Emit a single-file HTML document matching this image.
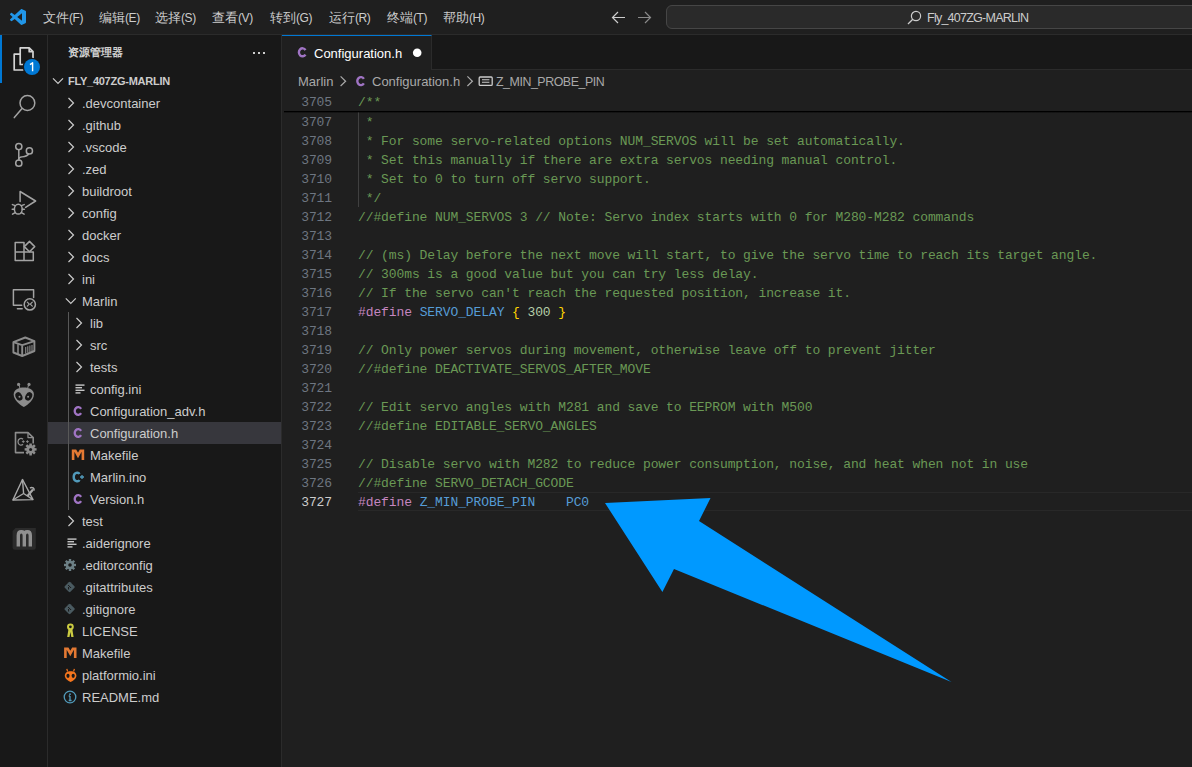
<!DOCTYPE html>
<html><head><meta charset="utf-8">
<style>
*{margin:0;padding:0;box-sizing:border-box}
html,body{width:1192px;height:767px;overflow:hidden;background:#1f1f1f;font-family:"Liberation Sans",sans-serif;color:#cccccc}
.abs{position:absolute}
#title{left:0;top:0;width:1192px;height:35px;background:#1f1f1f;border-bottom:1px solid #2b2b2b}
.menu{position:absolute;top:1px;height:34px;line-height:34px;font-size:13px;color:#cccccc;white-space:nowrap}
#act{left:0;top:35px;width:48px;height:732px;background:#181818;border-right:1px solid #2b2b2b}
#side{left:48px;top:35px;width:234px;height:732px;background:#181818;border-right:1px solid #2b2b2b}
.row{position:absolute;left:0;width:233px;height:22px;line-height:22px;font-size:13px;color:#cccccc;white-space:nowrap}
.row .t{position:absolute;top:1px}
.chev{position:absolute;top:0}
#tabs{left:282px;top:35px;width:910px;height:35px;background:#181818;border-bottom:1px solid #2b2b2b}
#tab{left:282px;top:35px;width:150px;height:35px;background:#1f1f1f;border-top:1px solid #0078d4;border-right:1px solid #2b2b2b}
#crumb{left:282px;top:70px;width:910px;height:22px;background:#1f1f1f;font-size:13px;color:#a9a9a9;line-height:22px;white-space:nowrap}
.ln{position:absolute;left:282px;width:50px;height:19px;line-height:21px;text-align:right;font-family:"Liberation Mono",monospace;font-size:13px;color:#6e7681;letter-spacing:-0.1px}
.code{position:absolute;left:358px;height:19px;line-height:21px;font-family:"Liberation Mono",monospace;font-size:13px;letter-spacing:-0.1px;white-space:pre;color:#6a9955}
.kw{color:#c586c0}.id{color:#569cd6}.br{color:#ffd700}.num{color:#b5cea8}
</style></head><body>

<div id="title" class="abs">
  <svg class="abs" style="left:10px;top:9px" width="16" height="16" viewBox="0 0 100 100">
    <path d="M96.46 10.8 L75.86 0.87 C73.48 -0.27 70.6 0.21 68.74 2.08 L29.3 38.06 L12.12 25.02 C10.52 23.8 8.28 23.9 6.8 25.26 L1.28 30.28 C-0.54 31.94 -0.54 34.8 1.28 36.46 L16.18 50 L1.28 63.54 C-0.54 65.2 -0.54 68.06 1.28 69.72 L6.8 74.74 C8.28 76.1 10.52 76.2 12.12 74.98 L29.3 61.94 L68.74 97.92 C70.6 99.79 73.48 100.27 75.86 99.13 L96.46 89.2 C98.62 88.16 100 85.98 100 83.58 V16.42 C100 14.02 98.62 11.84 96.46 10.8 Z M75 72.7 L45.07 50 L75 27.3 V72.7 Z" fill="#2196e8"/>
  </svg>
  <div class="menu" style="left:43px">文件<span style="font-size:12px;letter-spacing:-0.4px">(F)</span></div>
  <div class="menu" style="left:99px">编辑<span style="font-size:12px;letter-spacing:-0.4px">(E)</span></div>
  <div class="menu" style="left:155px">选择<span style="font-size:12px;letter-spacing:-0.4px">(S)</span></div>
  <div class="menu" style="left:212px">查看<span style="font-size:12px;letter-spacing:-0.4px">(V)</span></div>
  <div class="menu" style="left:270px">转到<span style="font-size:12px;letter-spacing:-0.4px">(G)</span></div>
  <div class="menu" style="left:329px">运行<span style="font-size:12px;letter-spacing:-0.4px">(R)</span></div>
  <div class="menu" style="left:387px">终端<span style="font-size:12px;letter-spacing:-0.4px">(T)</span></div>
  <div class="menu" style="left:443px">帮助<span style="font-size:12px;letter-spacing:-0.4px">(H)</span></div>
  <svg class="abs" style="left:611px;top:11px" width="15" height="13" viewBox="0 0 15 13"><path d="M7 1 L1.5 6.5 L7 12 M1.5 6.5 H14" stroke="#cccccc" stroke-width="1.2" fill="none"/></svg>
  <svg class="abs" style="left:637px;top:11px" width="15" height="13" viewBox="0 0 15 13"><path d="M8 1 L13.5 6.5 L8 12 M13.5 6.5 H1" stroke="#8a8a8a" stroke-width="1.2" fill="none"/></svg>
  <div class="abs" style="left:666px;top:5px;width:560px;height:24px;background:#2a2a2a;border:1px solid #464646;border-radius:6px"></div>
  <svg class="abs" style="left:907px;top:10px" width="15" height="15" viewBox="0 0 15 15"><circle cx="9" cy="6" r="4.6" stroke="#cccccc" stroke-width="1.2" fill="none"/><path d="M5.8 9.2 L1 14" stroke="#cccccc" stroke-width="1.3"/></svg>
  <div class="abs" style="left:927px;top:1px;height:34px;line-height:34px;font-size:12.5px;letter-spacing:-0.75px;color:#cccccc">Fly_407ZG-MARLIN</div>
</div>

<div id="act" class="abs"></div>
<svg class="abs" style="left:0;top:0" width="48" height="767" viewBox="0 0 48 767">
  <rect x="0" y="35" width="2" height="48" fill="#0078d4"/>
  <g fill="none" stroke="#d4d4d4" stroke-width="1.7" stroke-linejoin="round">
    <path d="M24.5 64.5 H20.2 V47.9 H29.2 L33 51.7 V60"/><path d="M29.2 47.9 V51.7 H33"/>
    <path d="M20.2 54.2 H14.2 V70 H24.5"/>
  </g>
  <circle cx="32" cy="67" r="9.3" fill="#181818"/><circle cx="32" cy="67" r="8" fill="#0078d4"/>
  <path d="M32.6 71.3 V62.8 L30 64.6" stroke="#ffffff" stroke-width="1.4" fill="none" stroke-linejoin="round"/>
  <g fill="none" stroke="#a3a3a3" stroke-width="1.5" stroke-linejoin="round" stroke-linecap="round">
    <circle cx="27.4" cy="103" r="7.4"/><path d="M21.8 108.8 L14.3 117.6"/>
    <circle cx="18.8" cy="146.6" r="3.1"/><circle cx="18.8" cy="163.2" r="3.1"/><circle cx="29.4" cy="150.9" r="3.1"/>
    <path d="M18.8 149.7 V160.1"/><path d="M28.6 153.9 C27.5 156.5 24 156.6 21 157 C19.6 157.3 18.8 158.3 18.8 159"/>
    <path d="M20.1 201.6 V191.5 L35.6 201 L25.6 207.4"/>
    <ellipse cx="18.3" cy="209.2" rx="3.9" ry="4.9"/><path d="M14.4 209.3 H12.2 M22.2 209.3 H24.4 M15.3 205.6 L12.4 204.6 M21.3 205.6 L24.2 204.6 M15.2 212.6 L12.5 214.2 M21.4 212.6 L24.1 214.2"/>
    <path d="M15.2 242.6 H24 V260.6 H15.2 Z M15.2 251.9 H33.3 V260.6 H24"/><path d="M24.3 246.6 L29.5 241.4 L34.7 246.6 L29.5 251.8 Z"/>
    <path d="M21.7 305.3 H13.4 V289.7 H33.6 V297.6"/><path d="M17.4 308.7 H22.2"/>
    <circle cx="29.8" cy="304.4" r="5.6"/><path d="M27.3 302.2 L29.3 304.2 L27.3 306.2 M32.3 302.2 L30.3 304.2 L32.3 306.2" stroke-width="1.2"/>
  </g>
  <g fill="none" stroke="#8c8c8c" stroke-width="1.9" stroke-linejoin="round">
    <path d="M13.4 342.2 L25.3 337.5 L34.4 341.2 V351 L22.2 356 L13.4 352.5 Z"/><path d="M13.4 342.2 L22.2 345.2 L34.4 341.2 M22.2 345.2 V356"/>
    <path d="M18 344.2 V354" stroke-width="1.5"/>
    <path d="M25.7 347 V353.5 M27.8 346.3 V352.8 M29.9 345.6 V352 M32 344.9 V351.3" stroke-width="1.1"/>
  </g>
  <g fill="#8c8c8c">
    <path d="M23.8 387.4 C29.5 387.4 33.9 389.6 33.9 394.4 C33.9 399.5 28.5 404.5 23.8 407 C19.1 404.5 13.7 399.5 13.7 394.4 C13.7 389.6 18.1 387.4 23.8 387.4 Z"/>
    <circle cx="18.6" cy="384.4" r="1.6"/><circle cx="29" cy="384.4" r="1.6"/>
  </g>
  <path d="M19 385 L20 388.5 M28.6 385 L27.6 388.5" stroke="#8c8c8c" stroke-width="1"/>
  <ellipse cx="18.9" cy="396.3" rx="3.2" ry="4.5" fill="#181818" transform="rotate(-28 19.1 396.3)"/>
  <ellipse cx="28.7" cy="396.3" rx="3.2" ry="4.5" fill="#181818" transform="rotate(28 28.5 396.3)"/>
  <circle cx="19.5" cy="396.8" r="1" fill="#8c8c8c"/><circle cx="28.1" cy="396.8" r="1" fill="#8c8c8c"/>
  <g fill="none" stroke="#8c8c8c" stroke-width="1.6" stroke-linejoin="round">
    <path d="M24 452.6 H15.5 V432.6 H28 L33.2 437.6 V443.5"/><path d="M28 432.6 V437.6 H33.2" stroke-width="1.3"/>
    <path d="M23 439.3 C21.5 437.7 18 438.2 18 441.8 C18 445.4 21.5 445.9 23 444.3" stroke-width="1.3"/>
    <path d="M23.3 440.2 V443 M21.9 441.6 H24.7 M27.4 440.2 V443 M26 441.6 H28.8" stroke-width="0.9"/>
  </g>
  <g fill="#8c8c8c">
    <circle cx="30.6" cy="449.4" r="4.2"/>
    <path d="M29.4 443.4 H31.8 L32 446 H29.2 Z" transform="rotate(0 30.6 449.4)"/>
    <path d="M29.4 443.4 H31.8 L32 446 H29.2 Z" transform="rotate(45 30.6 449.4)"/>
    <path d="M29.4 443.4 H31.8 L32 446 H29.2 Z" transform="rotate(90 30.6 449.4)"/>
    <path d="M29.4 443.4 H31.8 L32 446 H29.2 Z" transform="rotate(135 30.6 449.4)"/>
    <path d="M29.4 443.4 H31.8 L32 446 H29.2 Z" transform="rotate(180 30.6 449.4)"/>
    <path d="M29.4 443.4 H31.8 L32 446 H29.2 Z" transform="rotate(225 30.6 449.4)"/>
    <path d="M29.4 443.4 H31.8 L32 446 H29.2 Z" transform="rotate(270 30.6 449.4)"/>
    <path d="M29.4 443.4 H31.8 L32 446 H29.2 Z" transform="rotate(315 30.6 449.4)"/>
  </g>
  <circle cx="30.6" cy="449.4" r="1.5" fill="#181818"/>
  <g fill="none" stroke="#a8a8a8" stroke-width="1.4" stroke-linejoin="round">
    <path d="M22.5 479.5 L12.9 500 L33 499.6 Z"/><path d="M22.5 479.5 L23.6 493.5 L12.9 500 M23.6 493.5 L33 499.6"/>
  </g>
  <path d="M27.5 496 L33 489.5" stroke="#a8a8a8" stroke-width="2.2"/>
  <path d="M30 488 C32.5 486.5 34.5 488.5 34 490.5" stroke="#a8a8a8" stroke-width="1.6" fill="none"/>
  <path d="M12.6 531 L15.5 528.1 H35.8 V547.5 Q35.8 549.8 33.5 549.8 H14.9 Q12.6 549.8 12.6 547.5 Z" fill="#2b2b2b"/>
  <path d="M18.3 546.6 V535.5 C18.3 530.5 24.3 530.5 24.3 535.5 V546.6 M24.3 535.5 C24.3 530.5 30.3 530.5 30.3 535.5 V546.6" fill="none" stroke="#909090" stroke-width="3.4"/>
</svg>
<div id="side" class="abs"></div>
<svg class="abs" style="left:0;top:0" width="282" height="767" viewBox="0 0 282 767">
<g transform="translate(48 0)"><rect x="0" y="422" width="233" height="22" fill="#37373d"/></g>
<path d="M53 78.4 L58 83.4 L63 78.4" stroke="#cccccc" stroke-width="1.2" fill="none"/>
<rect x="68" y="312" width="1" height="198" fill="#585858"/>
<rect x="253" y="52" width="2" height="2" fill="#cccccc"/><rect x="258" y="52" width="2" height="2" fill="#cccccc"/><rect x="263" y="52" width="2" height="2" fill="#cccccc"/>
<path d="M68.5 98 L73.5 103 L68.5 108" stroke="#cccccc" stroke-width="1.2" fill="none"/>
<path d="M68.5 120 L73.5 125 L68.5 130" stroke="#cccccc" stroke-width="1.2" fill="none"/>
<path d="M68.5 142 L73.5 147 L68.5 152" stroke="#cccccc" stroke-width="1.2" fill="none"/>
<path d="M68.5 164 L73.5 169 L68.5 174" stroke="#cccccc" stroke-width="1.2" fill="none"/>
<path d="M68.5 186 L73.5 191 L68.5 196" stroke="#cccccc" stroke-width="1.2" fill="none"/>
<path d="M68.5 208 L73.5 213 L68.5 218" stroke="#cccccc" stroke-width="1.2" fill="none"/>
<path d="M68.5 230 L73.5 235 L68.5 240" stroke="#cccccc" stroke-width="1.2" fill="none"/>
<path d="M68.5 252 L73.5 257 L68.5 262" stroke="#cccccc" stroke-width="1.2" fill="none"/>
<path d="M68.5 274 L73.5 279 L68.5 284" stroke="#cccccc" stroke-width="1.2" fill="none"/>
<path d="M65.8 298.4 L70.8 303.4 L75.8 298.4" stroke="#cccccc" stroke-width="1.2" fill="none"/>
<path d="M76.5 318 L81.5 323 L76.5 328" stroke="#cccccc" stroke-width="1.2" fill="none"/>
<path d="M76.5 340 L81.5 345 L76.5 350" stroke="#cccccc" stroke-width="1.2" fill="none"/>
<path d="M76.5 362 L81.5 367 L76.5 372" stroke="#cccccc" stroke-width="1.2" fill="none"/>
<g fill="#c5c5c5"><rect x="75.5" y="384.4" width="9" height="1.4"/><rect x="75.5" y="387.0" width="6.5" height="1.4"/><rect x="75.5" y="389.59999999999997" width="9" height="1.4"/><rect x="75.5" y="392.2" width="5" height="1.4"/></g>
<path d="M81.10 408.82 A3.50 3.9 0 1 0 81.10 413.18" stroke="#a074c4" stroke-width="2.3" fill="none"/>
<path d="M81.10 430.82 A3.50 3.9 0 1 0 81.10 435.18" stroke="#a074c4" stroke-width="2.3" fill="none"/>
<path d="M73.1 460 V450.8 H75.39999999999999 L78.0 455.5 L80.6 450.8 H82.89999999999999 V460" stroke="#e37933" stroke-width="2.6" fill="none" stroke-linejoin="miter"/>
<path d="M79.5 474 C78.5 472 73.7 472 73.7 477 C73.7 482 78.5 482 79.5 480" stroke="#519aba" stroke-width="2.4" fill="none"/><path d="M82.0 475 V479 M80.0 477 H84.0" stroke="#519aba" stroke-width="1.3"/>
<path d="M81.10 496.82 A3.50 3.9 0 1 0 81.10 501.18" stroke="#a074c4" stroke-width="2.3" fill="none"/>
<path d="M68.5 516 L73.5 521 L68.5 526" stroke="#cccccc" stroke-width="1.2" fill="none"/>
<g fill="#c5c5c5"><rect x="67.5" y="538.4" width="9" height="1.4"/><rect x="67.5" y="541.0" width="6.5" height="1.4"/><rect x="67.5" y="543.6" width="9" height="1.4"/><rect x="67.5" y="546.1999999999999" width="5" height="1.4"/></g>
<g fill="#6d8086"><circle cx="70" cy="565" r="4.3"/><rect x="68.8" y="559" width="2.4" height="3" transform="rotate(0 70 565)"/><rect x="68.8" y="559" width="2.4" height="3" transform="rotate(45 70 565)"/><rect x="68.8" y="559" width="2.4" height="3" transform="rotate(90 70 565)"/><rect x="68.8" y="559" width="2.4" height="3" transform="rotate(135 70 565)"/><rect x="68.8" y="559" width="2.4" height="3" transform="rotate(180 70 565)"/><rect x="68.8" y="559" width="2.4" height="3" transform="rotate(225 70 565)"/><rect x="68.8" y="559" width="2.4" height="3" transform="rotate(270 70 565)"/><rect x="68.8" y="559" width="2.4" height="3" transform="rotate(315 70 565)"/></g><circle cx="70" cy="565" r="1.8" fill="#181818"/>
<rect x="65.6" y="583.0" width="8" height="8" rx="1.2" fill="#4a5a60" transform="rotate(45 69.6 587.0)"/><path d="M68.1 585 L71.1 588 M68.6 587 V589.5" stroke="#181818" stroke-width="1"/>
<rect x="65.6" y="605.0" width="8" height="8" rx="1.2" fill="#4a5a60" transform="rotate(45 69.6 609.0)"/><path d="M68.1 607 L71.1 610 M68.6 609 V611.5" stroke="#181818" stroke-width="1"/>
<g fill="none" stroke="#cbcb41" stroke-width="2"><circle cx="70.4" cy="626.8" r="2.4"/></g><path d="M68.5 629 L67.2 637 H69.5 L70.4 632 L71.3 637 H73.6 L72.3 629 Z" fill="#cbcb41"/>
<path d="M65.39999999999999 658 V648.8 H67.69999999999999 L70.3 653.5 L72.89999999999999 648.8 H75.19999999999999 V658" stroke="#e37933" stroke-width="2.6" fill="none" stroke-linejoin="miter"/>
<path d="M70.60000000000001 671.2 C75.10000000000001 671.2 76.4 673.5 76.4 675.8 C76.4 678.5 73.10000000000001 681 70.60000000000001 682 C68.10000000000001 681 64.80000000000001 678.5 64.80000000000001 675.8 C64.80000000000001 673.5 66.10000000000001 671.2 70.60000000000001 671.2 Z" fill="#f5761e"/><path d="M67.60000000000001 671.5 L66.80000000000001 668.8 M73.60000000000001 671.5 L74.4 668.8" stroke="#f5761e" stroke-width="1.2"/><ellipse cx="68.00000000000001" cy="675.8" rx="1.6" ry="2.1" fill="#181818"/><ellipse cx="73.2" cy="675.8" rx="1.6" ry="2.1" fill="#181818"/>
<circle cx="70" cy="697" r="5.8" stroke="#519aba" stroke-width="1.3" fill="none"/><circle cx="70" cy="694.2" r="0.9" fill="#519aba"/><path d="M70 696 V700.5 M68.7 700.5 H71.6 M68.7 696 H70" stroke="#519aba" stroke-width="1.3" fill="none"/>
</svg>
<div class="abs" style="left:68px;top:35px;height:35px;line-height:35px;font-size:11px;font-weight:bold;color:#cfcfcf;white-space:nowrap">资源管理器</div>
<div class="abs" style="left:68px;top:70px;height:22px;line-height:22px;font-size:11px;font-weight:bold;color:#cccccc;letter-spacing:-0.25px;white-space:nowrap">FLY_407ZG-MARLIN</div>
<div class="abs" style="left:48px;top:0;width:234px;height:767px">
<div class="row" style="top:92px"><span class="t" style="left:34px">.devcontainer</span></div>
<div class="row" style="top:114px"><span class="t" style="left:34px">.github</span></div>
<div class="row" style="top:136px"><span class="t" style="left:34px">.vscode</span></div>
<div class="row" style="top:158px"><span class="t" style="left:34px">.zed</span></div>
<div class="row" style="top:180px"><span class="t" style="left:34px">buildroot</span></div>
<div class="row" style="top:202px"><span class="t" style="left:34px">config</span></div>
<div class="row" style="top:224px"><span class="t" style="left:34px">docker</span></div>
<div class="row" style="top:246px"><span class="t" style="left:34px">docs</span></div>
<div class="row" style="top:268px"><span class="t" style="left:34px">ini</span></div>
<div class="row" style="top:290px"><span class="t" style="left:34px">Marlin</span></div>
<div class="row" style="top:312px"><span class="t" style="left:42px">lib</span></div>
<div class="row" style="top:334px"><span class="t" style="left:42px">src</span></div>
<div class="row" style="top:356px"><span class="t" style="left:42px">tests</span></div>
<div class="row" style="top:378px"><span class="t" style="left:42px">config.ini</span></div>
<div class="row" style="top:400px"><span class="t" style="left:42px">Configuration_adv.h</span></div>
<div class="row" style="top:422px"><span class="t" style="left:42px">Configuration.h</span></div>
<div class="row" style="top:444px"><span class="t" style="left:42px">Makefile</span></div>
<div class="row" style="top:466px"><span class="t" style="left:42px">Marlin.ino</span></div>
<div class="row" style="top:488px"><span class="t" style="left:42px">Version.h</span></div>
<div class="row" style="top:510px"><span class="t" style="left:34px">test</span></div>
<div class="row" style="top:532px"><span class="t" style="left:34px">.aiderignore</span></div>
<div class="row" style="top:554px"><span class="t" style="left:34px">.editorconfig</span></div>
<div class="row" style="top:576px"><span class="t" style="left:34px">.gitattributes</span></div>
<div class="row" style="top:598px"><span class="t" style="left:34px">.gitignore</span></div>
<div class="row" style="top:620px"><span class="t" style="left:34px">LICENSE</span></div>
<div class="row" style="top:642px"><span class="t" style="left:34px">Makefile</span></div>
<div class="row" style="top:664px"><span class="t" style="left:34px">platformio.ini</span></div>
<div class="row" style="top:686px"><span class="t" style="left:34px">README.md</span></div>
</div>

<div id="tabs" class="abs"></div>
<div id="tab" class="abs"></div>
<svg class="abs" style="left:0;top:0" width="1192" height="767" viewBox="0 0 1192 767">
  <path d="M305.48 50.06 A3.60 4.0 0 1 0 305.48 54.54" stroke="#a074c4" stroke-width="2.4" fill="none"/>
  <circle cx="417.2" cy="52.8" r="4.3" fill="#ffffff"/>
  <path d="M340.6 76.4 L345.6 81.2 L340.6 86" stroke="#a9a9a9" stroke-width="1.2" fill="none"/>
  <path d="M363.88 78.86 A3.60 4.0 0 1 0 363.88 83.34" stroke="#a074c4" stroke-width="2.4" fill="none"/>
  <path d="M467.4 76.4 L472.4 81.2 L467.4 86" stroke="#a9a9a9" stroke-width="1.2" fill="none"/>
  <rect x="479.2" y="77" width="13" height="8.4" rx="1" stroke="#cccccc" stroke-width="1.3" fill="none"/>
  <path d="M482 79.8 H489.4 M482 82.3 H489.4" stroke="#cccccc" stroke-width="1.1"/>
</svg>
<div class="abs" style="left:314px;top:36px;height:35px;line-height:36px;font-size:13px;color:#ffffff;white-space:nowrap">Configuration.h</div>
<div class="abs" style="left:298px;top:71px;height:22px;line-height:22px;font-size:13px;color:#a9a9a9;white-space:nowrap">Marlin</div>
<div class="abs" style="left:372px;top:71px;height:22px;line-height:22px;font-size:13px;color:#a9a9a9;white-space:nowrap">Configuration.h</div>
<div class="abs" style="left:496px;top:71px;height:22px;line-height:22px;font-size:12.4px;letter-spacing:-0.45px;color:#a9a9a9;white-space:nowrap">Z_MIN_PROBE_PIN</div>

<div class="abs" style="left:358px;top:492px;width:834px;height:19px;border-top:1px solid #282828;border-bottom:1px solid #282828"></div>
<div class="abs" style="left:358px;top:112px;width:1px;height:95px;background:#404040"></div>
<div class="ln" style="top:112px;">3707</div>
<div class="code" style="top:112px"> *</div>
<div class="ln" style="top:131px;">3708</div>
<div class="code" style="top:131px"> * For some servo-related options NUM_SERVOS will be set automatically.</div>
<div class="ln" style="top:150px;">3709</div>
<div class="code" style="top:150px"> * Set this manually if there are extra servos needing manual control.</div>
<div class="ln" style="top:169px;">3710</div>
<div class="code" style="top:169px"> * Set to 0 to turn off servo support.</div>
<div class="ln" style="top:188px;">3711</div>
<div class="code" style="top:188px"> */</div>
<div class="ln" style="top:207px;">3712</div>
<div class="code" style="top:207px">//#define NUM_SERVOS 3 // Note: Servo index starts with 0 for M280-M282 commands</div>
<div class="ln" style="top:226px;">3713</div>
<div class="ln" style="top:245px;">3714</div>
<div class="code" style="top:245px">// (ms) Delay before the next move will start, to give the servo time to reach its target angle.</div>
<div class="ln" style="top:264px;">3715</div>
<div class="code" style="top:264px">// 300ms is a good value but you can try less delay.</div>
<div class="ln" style="top:283px;">3716</div>
<div class="code" style="top:283px">// If the servo can't reach the requested position, increase it.</div>
<div class="ln" style="top:302px;">3717</div>
<div class="code" style="top:302px"><span class="kw">#define</span> <span class="id">SERVO_DELAY</span> <span class="br">{</span> <span class="num">300</span> <span class="br">}</span></div>
<div class="ln" style="top:321px;">3718</div>
<div class="ln" style="top:340px;">3719</div>
<div class="code" style="top:340px">// Only power servos during movement, otherwise leave off to prevent jitter</div>
<div class="ln" style="top:359px;">3720</div>
<div class="code" style="top:359px">//#define DEACTIVATE_SERVOS_AFTER_MOVE</div>
<div class="ln" style="top:378px;">3721</div>
<div class="ln" style="top:397px;">3722</div>
<div class="code" style="top:397px">// Edit servo angles with M281 and save to EEPROM with M500</div>
<div class="ln" style="top:416px;">3723</div>
<div class="code" style="top:416px">//#define EDITABLE_SERVO_ANGLES</div>
<div class="ln" style="top:435px;">3724</div>
<div class="ln" style="top:454px;">3725</div>
<div class="code" style="top:454px">// Disable servo with M282 to reduce power consumption, noise, and heat when not in use</div>
<div class="ln" style="top:473px;">3726</div>
<div class="code" style="top:473px">//#define SERVO_DETACH_GCODE</div>
<div class="ln" style="top:492px;color:#cccccc">3727</div>
<div class="code" style="top:492px"><span class="kw">#define</span> <span class="id">Z_MIN_PROBE_PIN</span>    <span class="id">PC0</span></div>
<div class="abs" style="left:282px;top:92px;width:910px;height:19px;background:#1f1f1f"></div><div class="abs" style="left:284px;top:111px;width:908px;height:2px;background:linear-gradient(#000000 50%,rgba(0,0,0,0.35) 50%)"></div>
<div class="ln" style="top:92px">3705</div><div class="code" style="top:92px">/**</div>
<svg class="abs" style="left:0;top:0" width="1192" height="767" viewBox="0 0 1192 767"><path d="M605 503 L710.5 498 L699 521 L951.5 682 L674 569 L662.4 592 Z" fill="#0099ff"/></svg>
</body></html>
